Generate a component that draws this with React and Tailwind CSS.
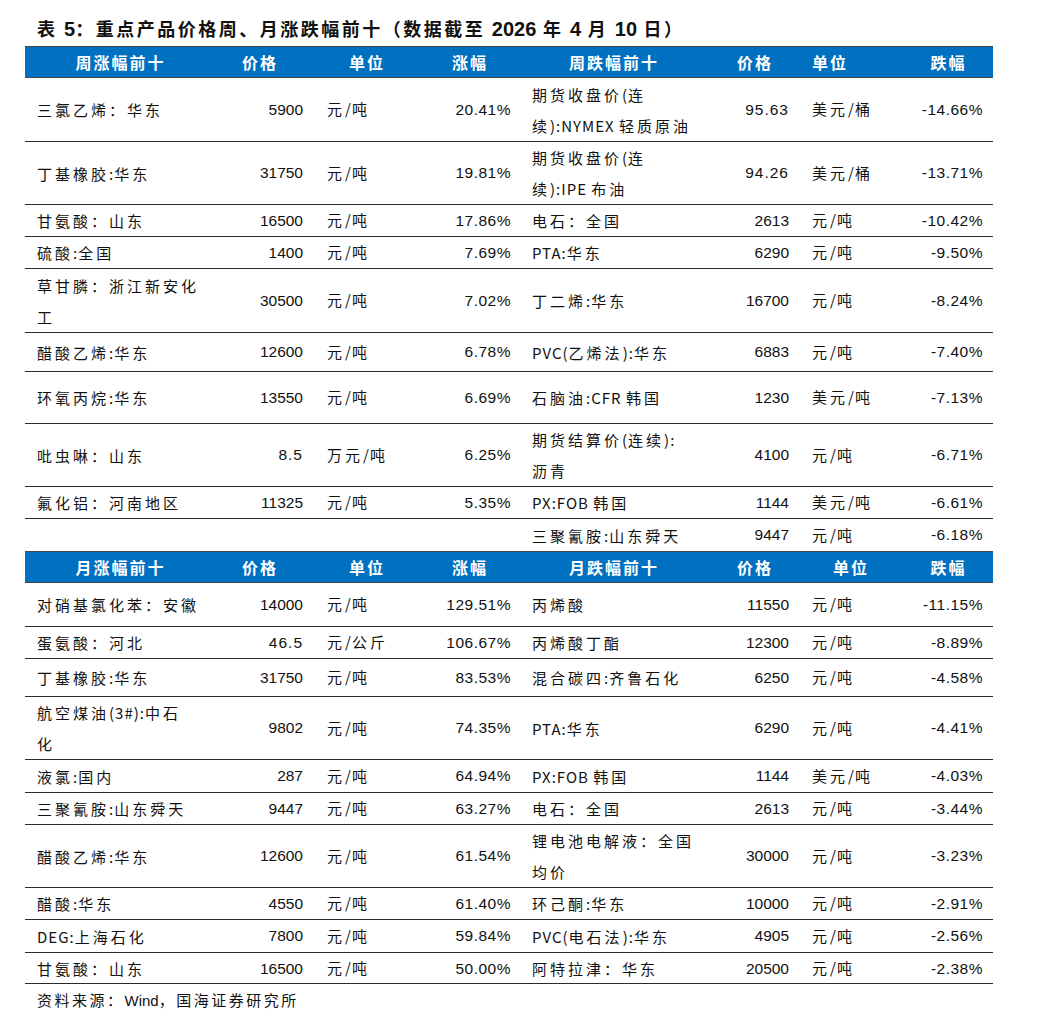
import React from "react"

const cjk = /[\u2e80-\u9fff\u3000-\u303f\uff00-\uffef]/

// split text into CJK / latin runs so each gets its own spacing
const Mixed = ({ text, wide, narrow }) => {
  const runs = []
  for (const ch of text) {
    const c = cjk.test(ch)
    const last = runs[runs.length - 1]
    if (last && last.c === c) last.t += ch
    else runs.push({ c, t: ch })
  }
  return runs.map((r, i) => (
    <span key={i} className={r.c ? wide : narrow}>
      {r.t}
    </span>
  ))
}

const cn = "font-['Noto_Sans_CJK_SC',sans-serif]"
const num = "font-['Liberation_Sans',Arial,sans-serif]"
const cols = "grid grid-cols-[185px_100px_114px_92px_196px_86px_106px_89px]"

const weekRows = [
  { h: "h-[64px]", l: ["三氯乙烯：华东", "5900", "元/吨", "20.41%"], r: ["期货收盘价(连\n续):NYMEX 轻质原油", "95.63", "美元/桶", "-14.66%"] },
  { h: "h-[63px]", l: ["丁基橡胶:华东", "31750", "元/吨", "19.81%"], r: ["期货收盘价(连\n续):IPE 布油", "94.26", "美元/桶", "-13.71%"] },
  { h: "h-[32px]", l: ["甘氨酸：山东", "16500", "元/吨", "17.86%"], r: ["电石：全国", "2613", "元/吨", "-10.42%"] },
  { h: "h-[32px]", l: ["硫酸:全国", "1400", "元/吨", "7.69%"], r: ["PTA:华东", "6290", "元/吨", "-9.50%"] },
  { h: "h-[64px]", l: ["草甘膦：浙江新安化\n工", "30500", "元/吨", "7.02%"], r: ["丁二烯:华东", "16700", "元/吨", "-8.24%"] },
  { h: "h-[39px]", l: ["醋酸乙烯:华东", "12600", "元/吨", "6.78%"], r: ["PVC(乙烯法):华东", "6883", "元/吨", "-7.40%"] },
  { h: "h-[52px]", l: ["环氧丙烷:华东", "13550", "元/吨", "6.69%"], r: ["石脑油:CFR 韩国", "1230", "美元/吨", "-7.13%"] },
  { h: "h-[63px]", l: ["吡虫啉：山东", "8.5", "万元/吨", "6.25%"], r: ["期货结算价(连续):\n沥青", "4100", "元/吨", "-6.71%"] },
  { h: "h-[32px]", l: ["氟化铝：河南地区", "11325", "元/吨", "5.35%"], r: ["PX:FOB 韩国", "1144", "美元/吨", "-6.61%"] },
  { h: "h-[32px]", l: null, r: ["三聚氰胺:山东舜天", "9447", "元/吨", "-6.18%"], last: true },
]

const monthRows = [
  { h: "h-[44px]", l: ["对硝基氯化苯：安徽", "14000", "元/吨", "129.51%"], r: ["丙烯酸", "11550", "元/吨", "-11.15%"] },
  { h: "h-[32px]", l: ["蛋氨酸：河北", "46.5", "元/公斤", "106.67%"], r: ["丙烯酸丁酯", "12300", "元/吨", "-8.89%"] },
  { h: "h-[38px]", l: ["丁基橡胶:华东", "31750", "元/吨", "83.53%"], r: ["混合碳四:齐鲁石化", "6250", "元/吨", "-4.58%"] },
  { h: "h-[63px]", l: ["航空煤油(3#):中石\n化", "9802", "元/吨", "74.35%"], r: ["PTA:华东", "6290", "元/吨", "-4.41%"] },
  { h: "h-[33px]", l: ["液氯:国内", "287", "元/吨", "64.94%"], r: ["PX:FOB 韩国", "1144", "美元/吨", "-4.03%"] },
  { h: "h-[32px]", l: ["三聚氰胺:山东舜天", "9447", "元/吨", "63.27%"], r: ["电石：全国", "2613", "元/吨", "-3.44%"] },
  { h: "h-[63px]", l: ["醋酸乙烯:华东", "12600", "元/吨", "61.54%"], r: ["锂电池电解液：全国\n均价", "30000", "元/吨", "-3.23%"] },
  { h: "h-[32px]", l: ["醋酸:华东", "4550", "元/吨", "61.40%"], r: ["环己酮:华东", "10000", "元/吨", "-2.91%"] },
  { h: "h-[33px]", l: ["DEG:上海石化", "7800", "元/吨", "59.84%"], r: ["PVC(电石法):华东", "4905", "元/吨", "-2.56%"] },
  { h: "h-[31px]", l: ["甘氨酸：山东", "16500", "元/吨", "50.00%"], r: ["阿特拉津：华东", "20500", "元/吨", "-2.38%"] },
]

const Name = ({ text, pad }) => (
  <div className={`flex flex-col justify-center ${pad} ${cn} text-[15px] leading-[31px]`}>
    {text.split("\n").map((line, i) => (
      <div key={i} className="whitespace-nowrap">
        <Mixed text={line} wide="tracking-[3px]" narrow="tracking-[1px]" />
      </div>
    ))}
  </div>
)

const Half = ({ d, right }) => {
  if (!d) return (<><div /><div /><div /><div /></>)
  const [name, price, unit, pct] = d
  return (
    <>
      <Name text={name} pad={right ? "pl-[16px]" : "pl-[12px]"} />
      <div className={`flex items-center justify-end ${right ? "pr-[9px]" : "pr-[7px]"} ${num} text-[15.5px] ${price.includes(".") ? "tracking-[1px]" : ""}`}>
        {price}
      </div>
      <div className={`flex items-center ${right ? "pl-[14px]" : "pl-[17px]"} ${cn} text-[15px]`}>
        <Mixed text={unit} wide="tracking-[3px]" narrow="tracking-[1px]" />
      </div>
      <div className={`flex items-center justify-end ${right ? "pr-[10px]" : "pr-[5px]"} ${num} text-[15.5px] tracking-[0.5px]`}>
        {pct}
      </div>
    </>
  )
}

const Header = ({ a, b, month }) => (
  <div className={`${cols} h-[32px] bg-[#0070c0] border-y border-[#4a4a4a] text-white font-bold ${cn} text-[16px] tracking-[2px]`}>
    <div className="flex items-center justify-center pl-[6px]">{a}</div>
    <div className="flex items-center justify-center">价格</div>
    <div className="flex items-center justify-center">单位</div>
    <div className="flex items-center justify-center">涨幅</div>
    <div className="flex items-center justify-center">{b}</div>
    <div className="flex items-center justify-center">价格</div>
    <div className={`flex items-center ${month ? "justify-center" : "pl-[14px]"}`}>单位</div>
    <div className="flex items-center justify-center">跌幅</div>
  </div>
)

const Body = ({ rows }) =>
  rows.map((row, i) => (
    <div key={i} className={`${cols} ${row.h} ${row.last ? "" : "border-b border-[#2a2a2a]"} text-[#111]`}>
      <Half d={row.l} />
      <Half d={row.r} right />
    </div>
  ))

export default function App() {
  return (
    <div className="w-[1050px] h-[1016px] bg-white text-[#111]">
      <div className="h-[46px] pt-[16px] pl-[37px] leading-[24px] text-[18px] font-bold whitespace-nowrap">
        <span className={`${cn} tracking-[2.5px]`}>表 </span>
        <span className={`${num} text-[20px]`}>5</span>
        <span className={`${cn} tracking-[2.5px]`}>：重点产品价格周、月涨跌幅前十（数据截至 </span>
        <span className={`${num} text-[20px]`}>2026</span>
        <span className={`${cn} tracking-[2.5px]`}> 年 </span>
        <span className={`${num} text-[20px]`}>4</span>
        <span className={`${cn} tracking-[2.5px]`}> 月 </span>
        <span className={`${num} text-[20px]`}>10</span>
        <span className={`${cn} tracking-[2.5px]`}> 日）</span>
      </div>
      <div className="ml-[25px] w-[968px]">
        <Header a="周涨幅前十" b="周跌幅前十" />
        <Body rows={weekRows} />
        <Header a="月涨幅前十" b="月跌幅前十" month />
        <Body rows={monthRows} />
      </div>
      <div className={`pt-[4px] pl-[37px] leading-[24px] text-[15px] ${cn}`}>
        <span className="tracking-[2.5px]">资料来源：</span>
        <span className={num}>Wind</span>
        <span className="tracking-[2.5px]">，国海证券研究所</span>
      </div>
    </div>
  )
}
